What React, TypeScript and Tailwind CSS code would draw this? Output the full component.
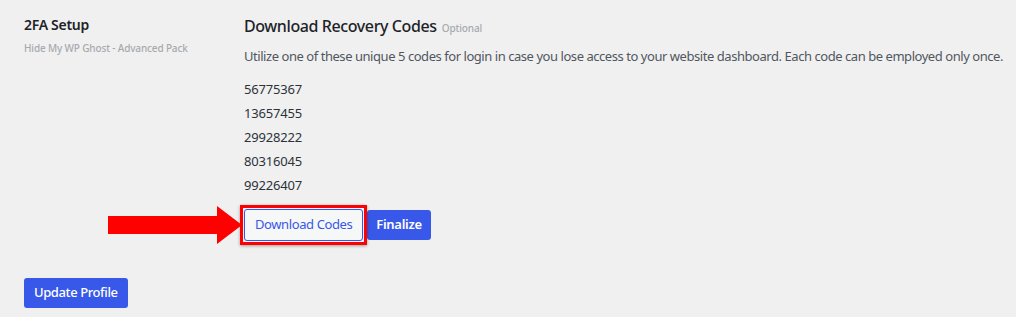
import React from 'react';

const codes = ['56775367', '13657455', '29928222', '80316045', '99226407'];

const font = { fontFamily: '"Noto Sans", "Open Sans", sans-serif' };

export default function App() {
  return (
    <div className="w-[1016px] h-[317px] bg-[#f0f0f1] text-[#1d2327] overflow-hidden tracking-[-0.4px]" style={font}>
      <div className="flex pt-[14px]">
        {/* Label column */}
        <div className="w-[244px] pl-[24px] shrink-0">
          <div className="text-[14px] font-semibold leading-[22px] text-[#1d2327] tracking-[-0.3px]">2FA Setup</div>
          <div className="text-[10px] leading-[16px] mt-[4px] text-[#a7aaad] font-medium tracking-[-0.15px]">Hide My WP Ghost - Advanced Pack</div>
        </div>

        {/* Content column */}
        <div className="flex-1">
          <div className="flex items-baseline gap-[5px]">
            <h2 className="text-[16px] font-medium leading-[24px] text-[#1d2327]">Download Recovery Codes</h2>
            <span className="text-[10px] text-[#a7aaad] font-medium tracking-[-0.1px]">Optional</span>
          </div>
          <p className="text-[13px] leading-[20px] mt-[8px] text-[#50575e] tracking-[-0.45px] whitespace-nowrap">
            Utilize one of these unique 5 codes for login in case you lose access to your website dashboard. Each code can be employed only once.
          </p>
          <div className="mt-[11px] flex flex-col text-[13px] leading-[24px] text-[#2c3338] tracking-[-0.2px]">
            {codes.map((c) => (
              <div key={c}>{c}</div>
            ))}
          </div>
          <div className="flex items-center gap-[4px] mt-[12px]">
            <div className="relative">
              <button className="h-[32px] px-[10px] rounded-[3px] border border-[#3858e9] bg-[#f6f7f7] text-[#3858e9] text-[13px]">
                Download Codes
              </button>
              {/* annotation box */}
              <div className="absolute -inset-[4px] border-[3px] border-[#ff0000] shadow-[0_1px_3px_rgba(0,0,0,0.35)] pointer-events-none" />
              {/* annotation arrow */}
              <svg className="absolute left-[-136px] top-[-4px]" width="134" height="40" viewBox="0 0 134 40">
                <polygon points="0,11 109,11 109,1 134,20 109,39 109,29 0,29" fill="#ff0000" />
              </svg>
            </div>
            <button className="h-[30px] px-[9px] rounded-[3px] bg-[#3858e9] text-white text-[13px] font-semibold tracking-[-0.3px]">
              Finalize
            </button>
          </div>
        </div>
      </div>

      <div className="pl-[24px] mt-[37px]">
        <button className="h-[30px] px-[10px] rounded-[3px] bg-[#3858e9] text-white text-[13px] font-medium tracking-[-0.4px]">
          Update Profile
        </button>
      </div>
    </div>
  );
}
